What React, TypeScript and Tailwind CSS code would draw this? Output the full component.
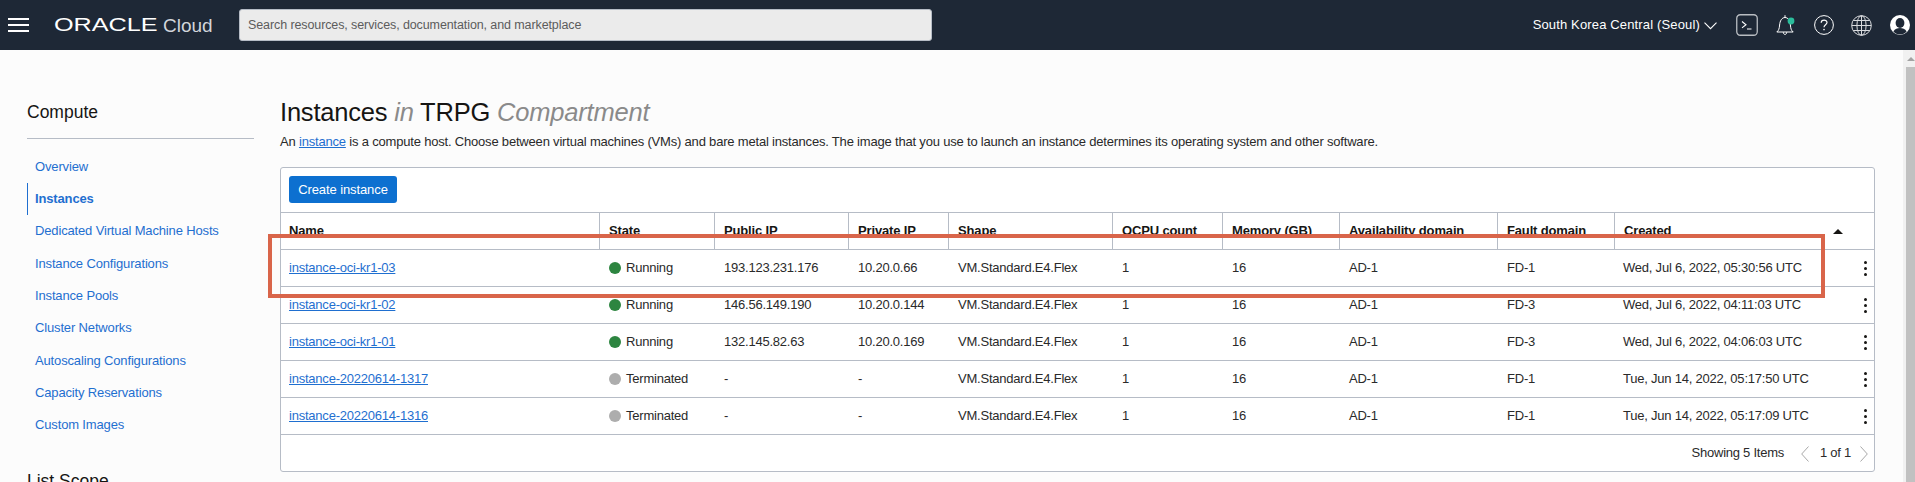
const navItems = [
  "Overview",
  "Instances",
  "Dedicated Virtual Machine Hosts",
  "Instance Configurations",
  "Instance Pools",
  "Cluster Networks",
  "Autoscaling Configurations",
  "Capacity Reservations",
  "Custom Images",
];

const columns = [
  "Name",
  "State",
  "Public IP",
  "Private IP",
  "Shape",
  "OCPU count",
  "Memory (GB)",
  "Availability domain",
  "Fault domain",
  "Created",
];

const rows = [
  ["instance-oci-kr1-03", "Running", "193.123.231.176", "10.20.0.66", "AD-1", "FD-1", "Wed, Jul 6, 2022, 05:30:56 UTC"],
  ["instance-oci-kr1-02", "Running", "146.56.149.190", "10.20.0.144", "AD-1", "FD-3", "Wed, Jul 6, 2022, 04:11:03 UTC"],
  ["instance-oci-kr1-01", "Running", "132.145.82.63", "10.20.0.169", "AD-1", "FD-3", "Wed, Jul 6, 2022, 04:06:03 UTC"],
  ["instance-20220614-1317", "Terminated", "-", "-", "AD-1", "FD-1", "Tue, Jun 14, 2022, 05:17:50 UTC"],
  ["instance-20220614-1316", "Terminated", "-", "-", "AD-1", "FD-1", "Tue, Jun 14, 2022, 05:17:09 UTC"],
];

const gridCols = "grid grid-cols-[318px_115px_134px_100px_164px_110px_117px_158px_117px_1fr]";

function TopIcons() {
  return (
    <div className="flex items-center">
      {/* Cloud shell */}
      <svg width="22" height="22" viewBox="0 0 22 22" fill="none" className="ml-[19px]">
        <rect x="0.75" y="0.75" width="20.5" height="20.5" rx="3.5" stroke="#b9bdc2" strokeWidth="1.3" />
        <path d="M6 7.5l4 3.2-4 3.2M11 15h4.5" stroke="#fff" strokeWidth="1.1" />
      </svg>
      {/* Bell */}
      <svg width="19" height="22" viewBox="0 0 19 22" fill="none" className="ml-[18px]">
        <path d="M.8 18c2-1.500 2.500-3.500 2.800-7C3.900 7 5.800 3.500 9 3.500s5.100 3.500 5.400 7.500c.3 3.500.8 5.500 2.800 7H.8z" stroke="#fff" strokeWidth="1" />
        <path d="M9 1.200v2.300" stroke="#fff" strokeWidth="1" />
        <path d="M7.300 18.200c0 3 3.400 3 3.400 0" stroke="#fff" strokeWidth="1" />
        <circle cx="15" cy="7" r="3.400" fill="#2bbd9b" />
      </svg>
      {/* Help */}
      <svg width="20" height="20" viewBox="0 0 20 20" fill="none" className="ml-[19px]">
        <circle cx="10" cy="10" r="9.400" stroke="#fff" strokeWidth="1" />
        <path d="M7.200 7.800c0-3.600 5.800-3.600 5.800-.2 0 2.200-3 2.200-3 4.700" stroke="#fff" strokeWidth="1.200" />
        <circle cx="10" cy="14.600" r=".8" fill="#fff" />
      </svg>
      {/* Globe */}
      <svg width="21" height="21" viewBox="0 0 21 21" fill="none" className="ml-[17px]">
        <circle cx="10.500" cy="10.500" r="9.800" stroke="#d9dbde" strokeWidth="1" />
        <ellipse cx="10.500" cy="10.500" rx="4.600" ry="9.800" stroke="#d9dbde" strokeWidth="1" />
        <path d="M10.500.7v19.600M.7 10.500h19.600M2.300 5.500h16.400M2.300 15.500h16.400" stroke="#d9dbde" strokeWidth="1" />
      </svg>
      {/* Avatar */}
      <svg width="20" height="20" viewBox="0 0 20 20" className="ml-[18px] mr-[5px]">
        <circle cx="10" cy="10" r="10" fill="#fff" />
        <ellipse cx="10" cy="8" rx="4.400" ry="5" fill="#1e2836" />
        <path d="M3.400 16.500c1.500-3 4-3.600 6.600-3.600s5.100.6 6.600 3.600C15 18.600 12.600 19.400 10 19.400s-5-.8-6.600-2.900z" fill="#1e2836" />
      </svg>
    </div>
  );
}

function Header() {
  return (
    <header className="h-[50px] bg-[#1e2836] flex items-center text-white shrink-0">
      <div className="ml-[8px] w-[21px] flex flex-col gap-[4px]">
        <div className="h-[2px] bg-white" />
        <div className="h-[2px] bg-white" />
        <div className="h-[2px] bg-white" />
      </div>
      <span className="ml-[25px] w-[104px] text-[18px] leading-none origin-left scale-x-[1.4]">ORACLE</span>
      <span className="ml-[5px] w-[76px] text-[19px] text-[#d1d5db] leading-none">Cloud</span>
      <div className="w-[693px] h-[32px] bg-[#ebebeb] border border-[#b6bcc6] rounded-[3px] flex items-center pl-[8px] text-[12.5px] tracking-[-0.1px] text-[#5c5c5c]">
        Search resources, services, documentation, and marketplace
      </div>
      <div className="ml-auto flex items-center">
        <span className="text-[13px] tracking-[0.15px]">South Korea Central (Seoul)</span>
        <svg width="13" height="8" viewBox="0 0 13 8" fill="none" className="ml-[4px] mt-[2px]">
          <path d="M.5.7l6 6 6-6" stroke="#fff" strokeWidth="1.100" />
        </svg>
        <TopIcons />
      </div>
    </header>
  );
}

function Sidebar() {
  return (
    <aside className="w-[227px] ml-[27px] shrink-0 pt-[50px]">
      <h2 className="text-[17.5px] leading-[24px] text-[#161513]">Compute</h2>
      <div className="mt-[14px] mb-[11.5px] border-t border-[#b6bcc6]" />
      <nav className="text-[13px] tracking-[-0.15px] text-[#1f6fd0]">
        {navItems.map((item) => (
          <div
            key={item}
            className={
              item === "Instances"
                ? "h-[32.3px] flex items-center pl-[7px] border-l border-[#1f6fd0] font-bold"
                : "h-[32.3px] flex items-center pl-[8px]"
            }
          >
            {item}
          </div>
        ))}
      </nav>
      <h2 className="mt-[28px] text-[17.5px] leading-[24px] text-[#161513]">List Scope</h2>
    </aside>
  );
}

function InstanceRow({ row }: { row: string[] }) {
  const running = row[1] === "Running";
  return (
    <div className={`${gridCols} h-[37px] border-b border-[#b6bcc6] items-center text-[13px] tracking-[-0.22px] text-[#2a2a2a]`}>
      <a className="pl-[8px] text-[#1f6fd0] underline">{row[0]}</a>
      <div className="pl-[10px] flex items-center gap-[5px]">
        <span className={running ? "w-[12px] h-[12px] rounded-full bg-[#2d8540]" : "w-[12px] h-[12px] rounded-full bg-[#adadad]"} />
        {row[1]}
      </div>
      <div className="pl-[10px]">{row[2]}</div>
      <div className="pl-[10px]">{row[3]}</div>
      <div className="pl-[10px]">VM.Standard.E4.Flex</div>
      <div className="pl-[10px]">1</div>
      <div className="pl-[10px]">16</div>
      <div className="pl-[10px]">{row[4]}</div>
      <div className="pl-[10px]">{row[5]}</div>
      <div className="pl-[9px] flex items-center justify-between pr-[7px]">
        <span>{row[6]}</span>
        <span className="flex flex-col gap-[3px]">
          <span className="w-[3px] h-[3px] bg-[#161513] rounded-full" />
          <span className="w-[3px] h-[3px] bg-[#161513] rounded-full" />
          <span className="w-[3px] h-[3px] bg-[#161513] rounded-full" />
        </span>
      </div>
    </div>
  );
}

function InstancesPanel() {
  return (
    <main className="ml-[26px] w-[1595px] shrink-0 pt-[44px]">
      <h1 className="text-[25.5px] tracking-[-0.2px] leading-[36px] text-[#161513]">
        Instances <em className="text-[#8a8a8a]">in</em> TRPG <em className="text-[#8a8a8a]">Compartment</em>
      </h1>
      <p className="mt-[3px] text-[13px] tracking-[-0.19px] leading-[18px] text-[#2a2a2a]">
        An <a className="text-[#1f6fd0] underline">instance</a> is a compute host. Choose between virtual machines (VMs) and bare metal instances. The image that you use to launch an instance determines its operating system and other software.
      </p>
      <section className="mt-[16px] h-[305px] bg-white border border-[#b6bcc6] rounded-[3px]">
        <div className="h-[45px] pl-[8px] pt-[8px] border-b border-[#b6bcc6]">
          <button className="w-[108px] h-[27px] bg-[#0d70d0] rounded-[3px] text-white text-[13px] tracking-[-0.1px]">Create instance</button>
        </div>
        <div className={`${gridCols} h-[37px] border-b border-[#b6bcc6] text-[13px] leading-[15px] tracking-[-0.15px] font-bold text-[#161513]`}>
          {columns.map((col, i) => (
            <div key={col} className={i === 0 ? "pl-[8px] pt-[10px]" : "pl-[9px] pt-[10px] border-l border-[#b6bcc6] relative"}>
              {col}
              {col === "Created" && (
                <span className="absolute right-[31px] top-[16px] w-0 h-0 border-x-[5px] border-x-transparent border-b-[5px] border-b-[#161513]" />
              )}
            </div>
          ))}
        </div>
        {rows.map((row) => (
          <InstanceRow key={row[0]} row={row} />
        ))}
        <div className="h-[35px] flex items-center justify-end pr-[6px] text-[13px] tracking-[-0.25px] text-[#2a2a2a]">
          <span>Showing 5 Items</span>
          <svg width="8" height="16" viewBox="0 0 8 16" fill="none" className="ml-[17px] mt-[3px]">
            <path d="M7.500.5L.7 8l6.800 7.500" stroke="#a8a8a8" strokeWidth="1" />
          </svg>
          <span className="ml-[11px]">1 of 1</span>
          <svg width="8" height="16" viewBox="0 0 8 16" fill="none" className="ml-[9px] mt-[3px]">
            <path d="M.5.5L7.300 8 .5 15.500" stroke="#a8a8a8" strokeWidth="1" />
          </svg>
        </div>
      </section>
    </main>
  );
}

export default function App() {
  return (
    <div className="relative w-[1915px] h-[482px] overflow-hidden flex flex-col bg-[#fcfcfc] font-['Liberation_Sans',Arial,sans-serif]">
      <Header />
      <div className="flex flex-1 min-h-0">
        <Sidebar />
        <InstancesPanel />
        {/* Page scrollbar, cut by the right edge of the shot */}
        <div className="ml-auto w-[12px] bg-[#f1f1f1] flex flex-col">
          <div className="h-[17px] pl-[4px] pt-[7px]">
            <div className="w-0 h-0 border-x-[4px] border-x-transparent border-b-[4px] border-b-[#a3a3a3]" />
          </div>
          <div className="ml-[3px] flex-1 bg-[#c1c1c1]" />
        </div>
      </div>
      {/* Red annotation box drawn over the screenshot */}
      <div className="absolute left-[268px] top-[234px] w-[1557px] h-[63.5px] border-4 border-[#d9654a]" />
    </div>
  );
}
